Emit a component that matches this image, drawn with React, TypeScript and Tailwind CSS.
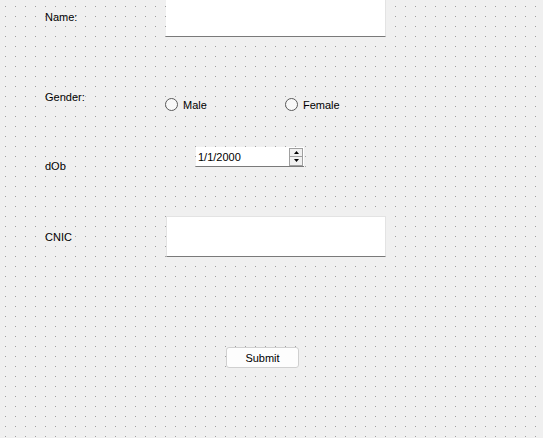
export default function App() {
  return (
    <div className="h-[438px] w-[543px] overflow-hidden bg-[#f0f0f0] bg-[radial-gradient(circle_at_5.5px_6.5px,#a0a0a0_0.7px,transparent_0.75px)] bg-[length:10px_10px] font-['Liberation_Sans',Arial,sans-serif] text-[11px] leading-[13px] text-[#000]">
      {/* Name */}
      <div className="flex h-[37px] items-start">
        <span className="ml-[45px] mt-[11px] w-[121px]">Name:</span>
        <div className="-mt-[4px] h-[41px] w-[220px] border-r border-b border-r-[#e3e3e3] border-b-[#7a7a7a] bg-white" />
      </div>

      {/* Gender */}
      <div className="mt-[54px] flex items-start">
        <span className="ml-[45px] w-[120px]">Gender:</span>
        <div className="mt-[7px] flex h-[13px]">
          <label className="flex h-[13px] w-[120px] items-start gap-[5px]">
            <span className="h-[13px] w-[13px] rounded-full border border-[#5a5a5a] bg-[#f8f8f8]" />
            <span className="mt-[1px]">Male</span>
          </label>
          <label className="flex h-[13px] items-start gap-[5px]">
            <span className="h-[13px] w-[13px] rounded-full border border-[#5a5a5a] bg-[#f8f8f8]" />
            <span className="mt-[1px]">Female</span>
          </label>
        </div>
      </div>

      {/* dOb */}
      <div className="mt-[36px] flex items-start">
        <span className="ml-[45px] mt-[13px] w-[151px]">dOb</span>
        <div className="flex h-[20px] w-[108px] items-center border-b border-[#7a7a7a] bg-white pl-[2px]">
          <span className="mt-[2px] flex-1">1/1/2000</span>
          <div className="mr-[1px] flex h-[18px] w-[14px] flex-col border border-[#a0a0a0] bg-[#f0f0f0]">
            <div className="flex flex-1 items-center justify-center border-b border-[#a0a0a0]">
              <svg width="5" height="3" viewBox="0 0 5 3">
                <path d="M2.5 0L5 3H0z" fill="#000" />
              </svg>
            </div>
            <div className="flex flex-1 items-center justify-center">
              <svg width="5" height="3" viewBox="0 0 5 3">
                <path d="M0 0h5L2.5 3z" fill="#000" />
              </svg>
            </div>
          </div>
        </div>
      </div>

      {/* CNIC */}
      <div className="mt-[43px] flex items-start">
        <span className="ml-[45px] mt-[15px] w-[121px]">CNIC</span>
        <div className="h-[41px] w-[220px] border border-b border-[#e3e3e3] border-b-[#7a7a7a] bg-white" />
      </div>

      {/* Submit */}
      <div className="mt-[90px] flex">
        <button className="ml-[226px] h-[21px] w-[73px] rounded-[3px] border border-[#d0d0d0] bg-[#fdfdfd] pt-[1px] text-[11px] leading-[13px]">
          Submit
        </button>
      </div>
    </div>
  );
}
